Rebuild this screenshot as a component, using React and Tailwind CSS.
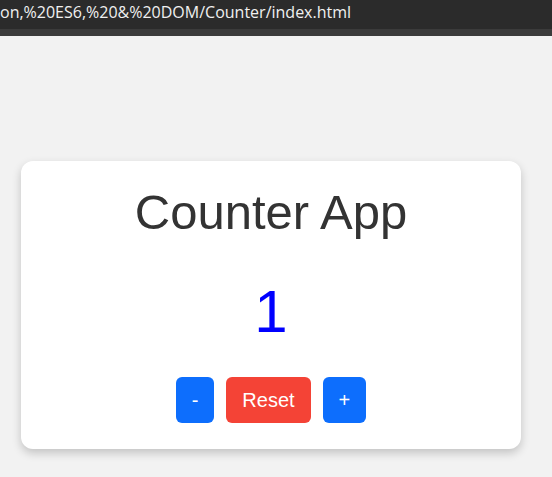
// Simple counter card shown below a cropped browser address bar.
function App() {
  const count = 1;

  return (
    <div className="h-[477px] overflow-hidden bg-[#f2f2f2] font-['Liberation_Sans',Arial,sans-serif]">
      <div className="flex h-[29px] items-start bg-[#2b2b2b] pt-[2px] font-['Open_Sans','Noto_Sans',sans-serif] text-[16px] leading-[20px] text-[#f0f0f0] whitespace-nowrap">
        <span>on,%20ES6,%20&amp;%20DOM/Counter/index.html</span>
      </div>
      <div className="h-[7px] bg-[#3b3b3b]" />

      <main className="pt-[125px]">
        <div className="ml-[21px] w-[500px] rounded-xl bg-white pt-[24px] pb-[26px] text-center shadow-[0_4px_10px_rgba(0,0,0,0.2)]">
          <h1 className="text-[49px] leading-[55px] text-[#333]">Counter App</h1>
          <p className="mt-[37px] text-[60px] leading-[69px] text-[#0000ff]">{count}</p>
          <div className="mt-[31px] flex justify-center gap-[12px]">
            <button className="h-[46px] rounded-md bg-[#0d6efd] px-4 text-[20px] text-white">-</button>
            <button className="h-[46px] rounded-md bg-[#f44336] px-4 text-[20px] text-white">Reset</button>
            <button className="h-[46px] rounded-md bg-[#0d6efd] px-4 text-[20px] text-white">+</button>
          </div>
        </div>
      </main>
    </div>
  );
}

export default App;
